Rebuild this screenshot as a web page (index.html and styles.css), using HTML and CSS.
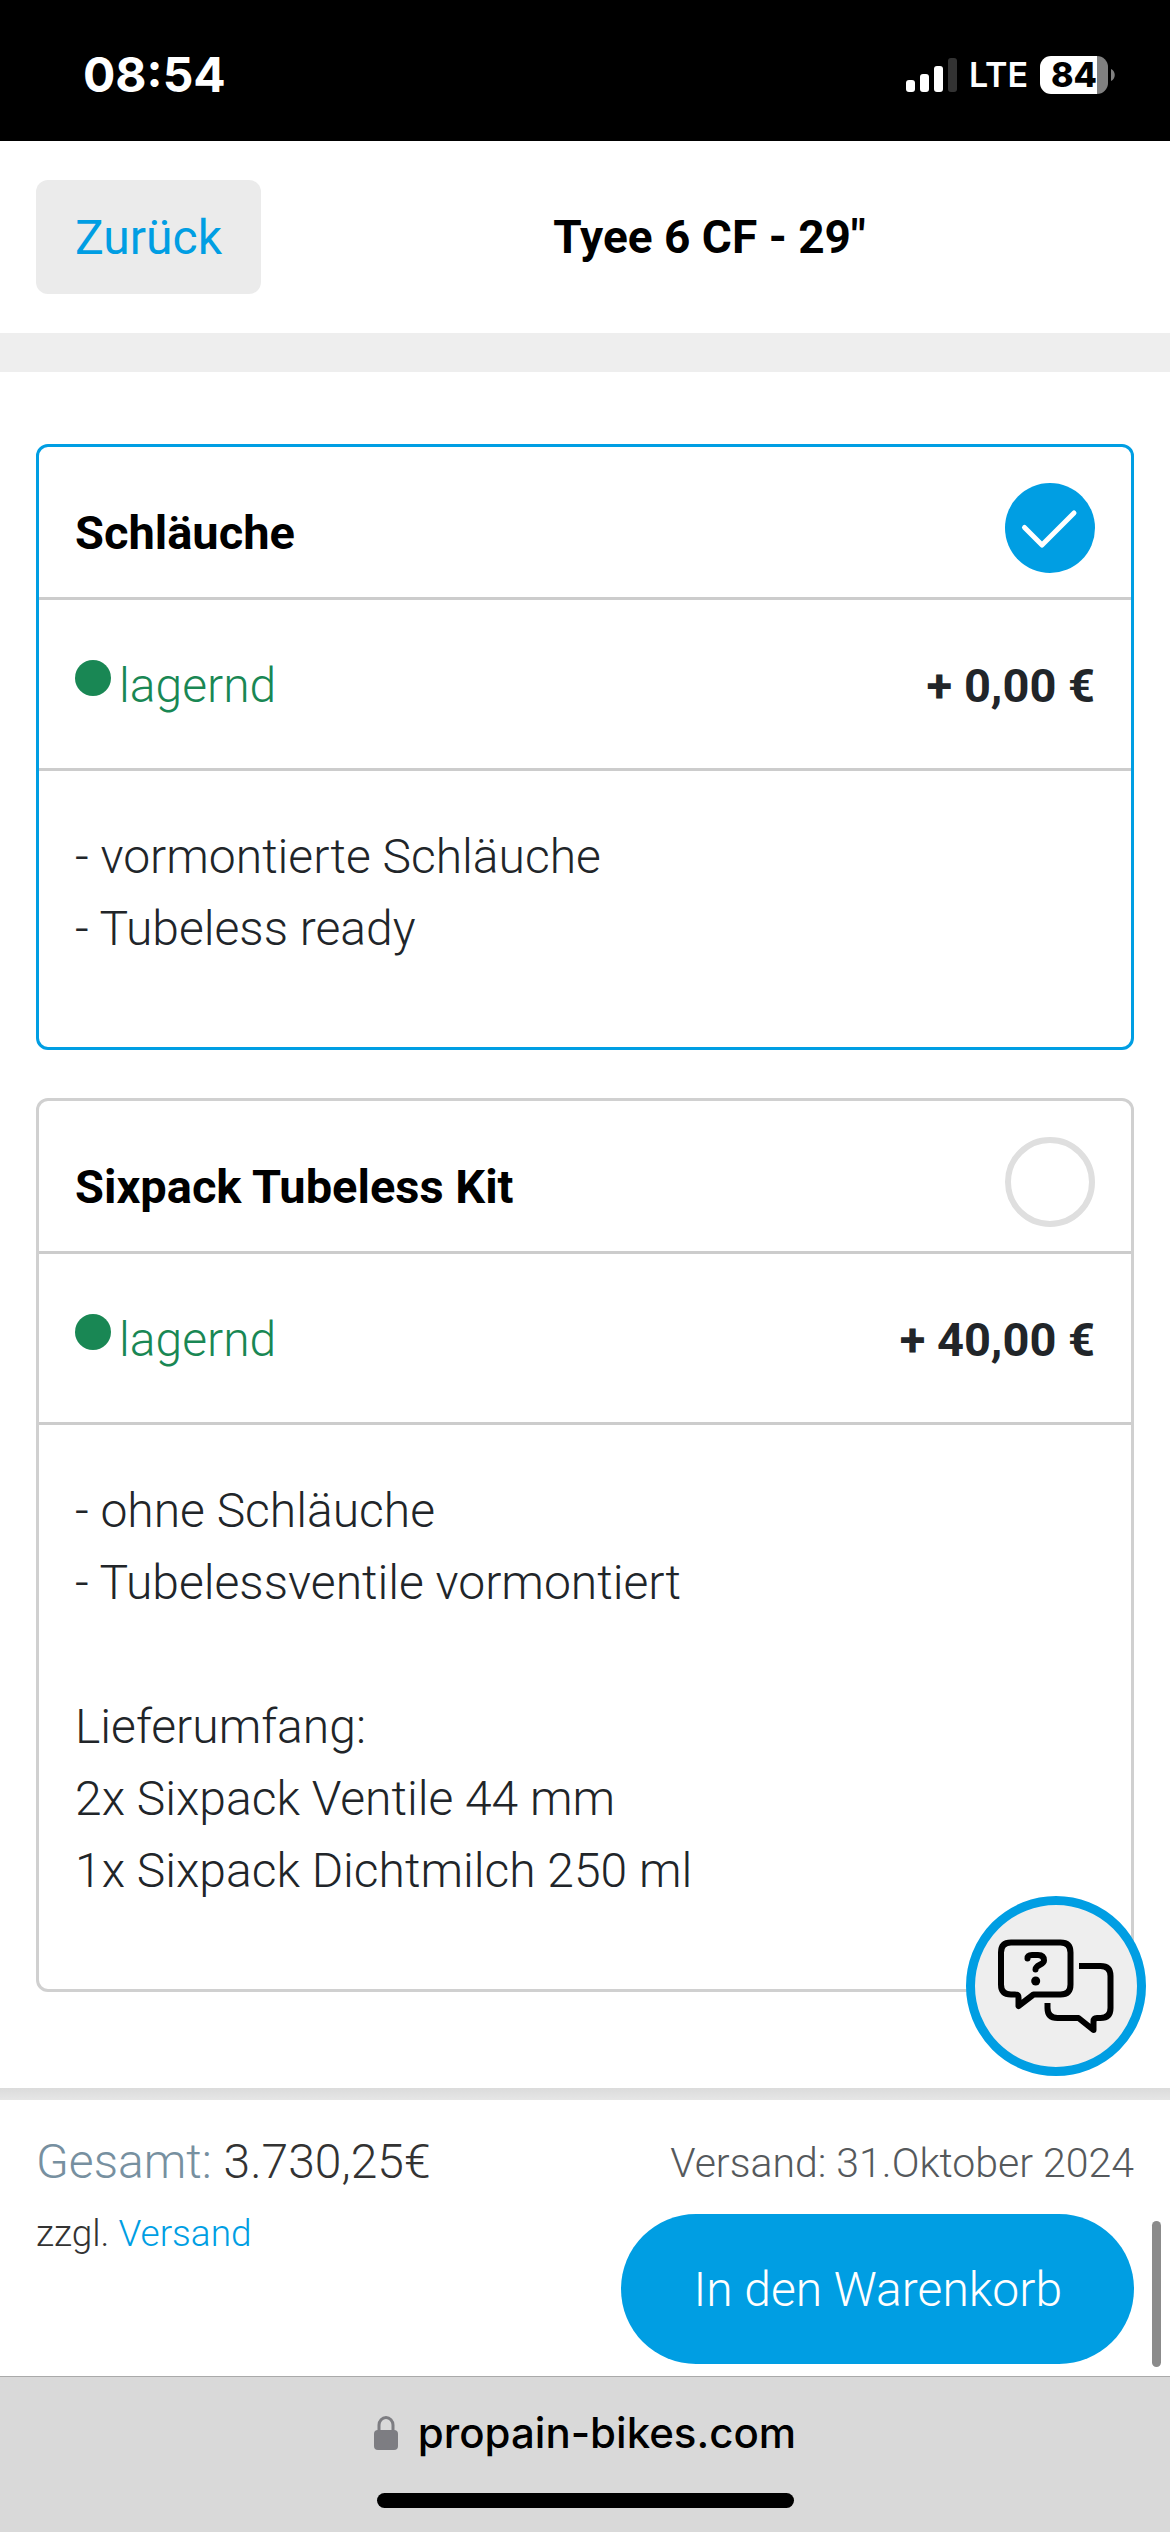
FILE: index.html
```html
<!DOCTYPE html>
<html lang="de">
<head>
  <meta charset="UTF-8" />
  <meta name="viewport" content="width=device-width, initial-scale=1" />
  <title>Tyee 6 CF - 29"</title>
  <link rel="stylesheet" href="styles.css">
</head>
<body>
  <div class="statusbar">
    <span class="time">08:54</span>
    <div class="status-icons">
      <svg class="signal" viewBox="0 0 51 34" width="51" height="34" fill="#fff">
        <rect x="0" y="22" width="9" height="12" rx="3" />
        <rect x="14" y="16" width="9" height="18" rx="3" />
        <rect x="28" y="8" width="9" height="26" rx="3" />
        <rect x="42" y="0" width="9" height="34" rx="3" fill="#333" />
      </svg>
      <span class="network">LTE</span>
      <span class="battery">84</span>
      <svg class="battery-tip" viewBox="0 0 4 12" width="4" height="12"><path d="M0 0C5 2 5 10 0 12z" fill="#808080" /></svg>
    </div>
  </div>

  <header class="topbar">
    <button type="button" class="btn-back">Zurück</button>
    <h1>Tyee 6 CF - 29"</h1>
  </header>

  <main class="content">
    <label class="option selected">
      <span class="option-head">
        <span class="option-name">Schläuche</span>
        <input type="radio" name="reifen" value="schlaeuche" checked />
      </span>
      <span class="option-stock">
        <span class="stock">lagernd</span>
        <span class="price">+ 0,00 €</span>
      </span>
      <span class="option-text">
        - vormontierte Schläuche<br>
        - Tubeless ready
      </span>
    </label>

    <label class="option">
      <span class="option-head">
        <span class="option-name">Sixpack Tubeless Kit</span>
        <input type="radio" name="reifen" value="tubeless" />
      </span>
      <span class="option-stock">
        <span class="stock">lagernd</span>
        <span class="price">+ 40,00 €</span>
      </span>
      <span class="option-text">
        - ohne Schläuche<br>
        - Tubelessventile vormontiert<br>
        <br>
        Lieferumfang:<br>
        2x Sixpack Ventile 44 mm<br>
        1x Sixpack Dichtmilch 250 ml
      </span>
    </label>
  </main>

  <footer class="buybar">
    <div class="sum">
      <p class="total"><span>Gesamt:</span> 3.730,25€</p>
      <p class="shipping">zzgl. <a href="#">Versand</a></p>
    </div>
    <div class="order">
      <p class="delivery">Versand: 31.Oktober 2024</p>
      <button type="button" class="btn-cart">In den Warenkorb</button>
    </div>
    <button type="button" class="btn-chat" aria-label="Hilfe">
      <svg viewBox="76 76 120 100" width="120" height="100" fill="none" stroke="#000" stroke-width="6" stroke-linejoin="round">
        <path d="M91 82.500H140.500Q150.500 82.500 150.500 92.500V124.500Q150.500 134.500 140.500 134.500H113.500L98.500 146V137.500Q98.500 134.500 95 134.500H91Q81 134.500 81 124.500V92.500Q81 82.500 91 82.500Z" />
        <path d="M159 106H180.500Q190.500 106 190.500 116V148Q190.500 158 180.500 158H177Q173.500 158 173.500 161.500V170L158.500 158H137.500Q127.500 158 127.500 148V143" />
        <path d="M107.500 98.500Q107.500 95 112 95H118Q124 95 124 100.500C124 105 115.500 104.500 115.500 109.500" stroke-linecap="round" />
        <circle cx="115.700" cy="121" r="4.500" fill="#000" stroke="none" />
      </svg>
    </button>
    <span class="scroll-thumb"></span>
  </footer>

  <div class="browserbar">
    <div class="url">
      <svg viewBox="0 0 24 34" width="24" height="34">
        <path d="M5 15V9a7 7.500 0 0 1 14 0v6" fill="none" stroke="#7d7d82" stroke-width="3" />
        <rect y="14" width="24" height="20" rx="4" fill="#7d7d82" />
      </svg>
      <span>propain-bikes.com</span>
    </div>
    <div class="home-indicator"></div>
  </div>
</body>
</html>
```
FILE: styles.css
```css
* { box-sizing: border-box; }

body {
  margin: 0;
  min-height: 100vh;
  display: flex;
  flex-direction: column;
  background: #fff;
  color: #212529;
  font-family: Roboto, "Liberation Sans", sans-serif;
  font-size: 48px;
  font-weight: 300;
  line-height: 72px;
}

h1, p { margin: 0; }
button { border: 0; font: inherit; cursor: pointer; }
a { color: #009ee3; text-decoration: none; }

/* status bar */
.statusbar {
  display: flex;
  justify-content: space-between;
  align-items: center;
  height: 141px;
  padding: 8px 55px 0 83px;
  background: #000;
  color: #fff;
  font-family: Inter, sans-serif;
}
.time { font-size: 48px; font-weight: 700; }
.status-icons { display: flex; align-items: center; }
.network { margin-left: 12px; font-size: 34px; font-weight: 600; }
.battery {
  width: 68px;
  height: 38px;
  margin: 0 3px 0 12px;
  border-radius: 11px;
  background: linear-gradient(to right, #fff 57px, #808080 57px);
  color: #000;
  font-size: 34px;
  font-weight: 800;
  line-height: 38px;
  text-align: center;
}

/* header */
.topbar {
  display: flex;
  align-items: center;
  gap: 24px;
  padding: 39px 36px;
  border-bottom: 39px solid #eee;
}
.btn-back {
  padding: 22px 39px 20px;
  border-radius: 12px;
  background: #ebebeb;
  color: #009ee3;
  font-weight: 400;
}
.topbar h1 {
  flex: 1;
  color: #000;
  font-size: 46px;
  font-weight: 700;
  text-align: center;
}

/* options */
.content {
  flex: 1;
  display: flex;
  flex-direction: column;
  gap: 48px;
  padding: 72px 36px 96px;
}
.option {
  display: block;
  border: 3px solid #d0d0d0;
  border-radius: 12px;
  cursor: pointer;
}
.option.selected { border-color: #009ee3; }
.option-head, .option-stock {
  display: flex;
  justify-content: space-between;
  align-items: center;
  border-bottom: 3px solid #ccc;
}
.option-head { padding: 36px 36px 24px; }
.option-name { padding-top: 10px; color: #000; font-size: 47px; font-weight: 700; }
.option-head input {
  appearance: none;
  width: 90px;
  height: 90px;
  margin: 0;
  border: 6px solid #dfdfdf;
  border-radius: 50%;
}
.option-head input:checked {
  border: 0;
  background: #009ee3 url("data:image/svg+xml,%3Csvg xmlns='http://www.w3.org/2000/svg' viewBox='0 0 90 90'%3E%3Cpath d='M19.500 44.500L37 62L69 30' fill='none' stroke='%23fff' stroke-width='5' stroke-linecap='round' stroke-linejoin='round'/%3E%3C/svg%3E");
}
.option-stock { padding: 50px 36px 46px; }
.stock { display: flex; color: #198754; }
.stock::before {
  content: "";
  width: 36px;
  height: 36px;
  margin: 10px 8px 0 0;
  border-radius: 50%;
  background: #198754;
}
.price { font-size: 47px; font-weight: 700; }
.option-text { display: block; padding: 50px 36px 82px; }

/* cart bar */
.buybar {
  position: relative;
  display: flex;
  justify-content: space-between;
  padding: 24px 36px 12px;
  background: #fff;
}
.buybar::before {
  content: "";
  position: absolute;
  left: 0;
  right: 0;
  bottom: 100%;
  height: 12px;
  background: linear-gradient(#dbdbdb, #e6e6e6);
}
.total, .shipping { color: #333; }
.total { line-height: 76px; }
.total span { color: #7790a0; }
.shipping { font-size: 37px; line-height: 68px; }
.order { display: flex; flex-direction: column; align-items: flex-end; gap: 12px; }
.delivery { color: #55595c; font-size: 41px; line-height: 78px; }
.btn-cart {
  padding: 40px 72px 38px;
  border-radius: 75px;
  background: #009ee3;
  color: #fff;
}
.btn-chat {
  position: absolute;
  right: 24px;
  bottom: calc(100% + 24px);
  display: flex;
  align-items: center;
  justify-content: center;
  width: 180px;
  height: 180px;
  padding: 0;
  border: 9px solid #009ee3;
  border-radius: 50%;
  background: #eee;
}
.btn-chat svg { flex: none; }
.scroll-thumb {
  position: absolute;
  right: 9px;
  bottom: 9px;
  width: 9px;
  height: 146px;
  border-radius: 5px;
  background: #8b8b8b;
}

/* browser bar */
.browserbar {
  display: flex;
  flex-direction: column;
  align-items: center;
  gap: 33px;
  padding: 29px 0 24px;
  border-top: 1px solid #aaa;
  background: #d9d9d9;
  color: #000;
}
.url {
  display: flex;
  align-items: center;
  gap: 20px;
  font-family: Inter, sans-serif;
  font-size: 42px;
  font-weight: 500;
  line-height: 54px;
}
.home-indicator {
  width: 417px;
  height: 15px;
  border-radius: 8px;
  background: #000;
}
```
